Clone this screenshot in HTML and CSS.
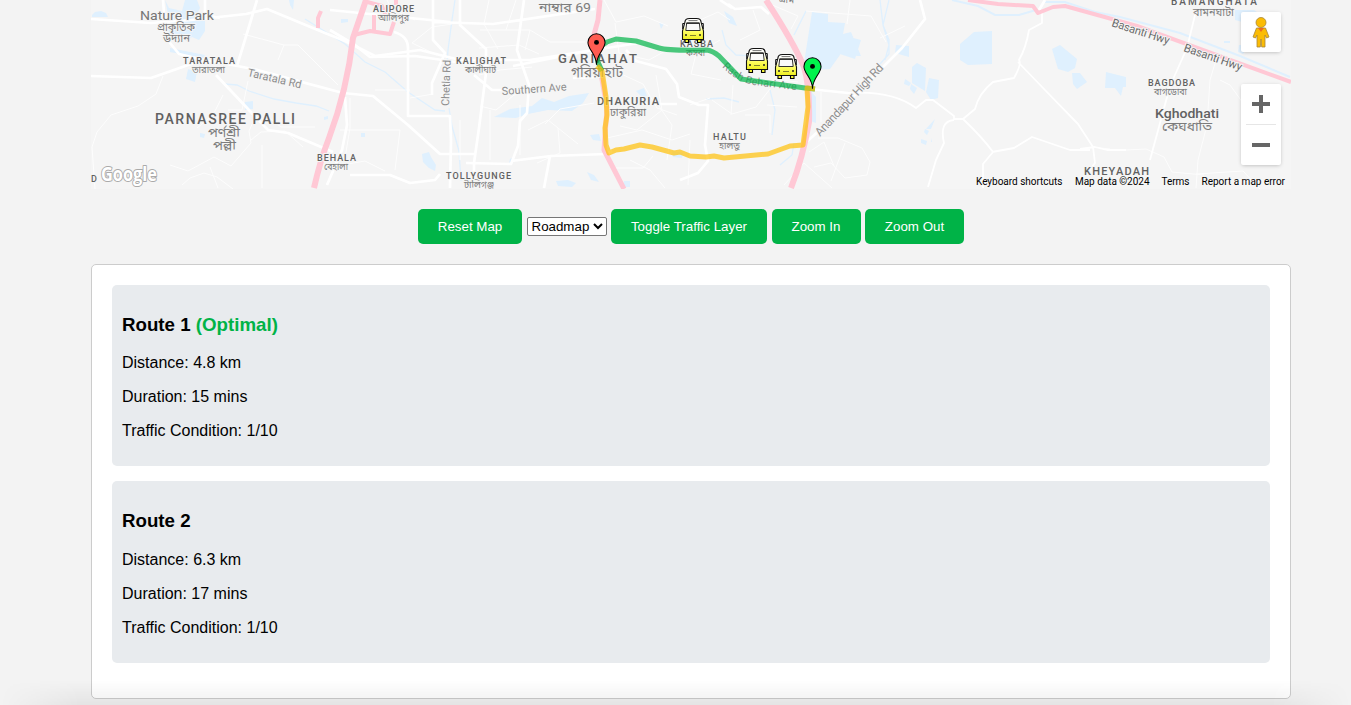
FILE: index.html
```html
<!DOCTYPE html>
<html lang="en">
<head>
<meta charset="utf-8">
<title>Route Planner</title>
<link rel="stylesheet" href="styles.css">
</head>
<body>
<main class="page">
  <section class="map">
    <svg class="map-canvas" viewBox="91 0 1200 189" width="1200" height="189">
      <defs>
        <linearGradient id="busPaint" x1="0" y1="0" x2="0" y2="1">
          <stop offset="0" stop-color="#fff"/><stop offset=".4" stop-color="#fffff0"/><stop offset=".62" stop-color="#ffff62"/><stop offset="1" stop-color="#eded20"/>
        </linearGradient>
        <symbol id="bus" viewBox="0 0 23 28" overflow="visible">
          <path d="M3.500 22v3.500h3.500V22M16 22v3.500h3.500V22" fill="#f4f43a" stroke="#000" stroke-width="1.100"/>
          <path d="M3.500 5Q3.500 1.500 8 1.500h7q4.500 0 4.500 3.500L22 14v8.500H1V14z" fill="url(#busPaint)" stroke="#111" stroke-width="1.100"/>
          <path d="M3 6.500H1.200V12M20 6.500h1.800V12" fill="none" stroke="#111" stroke-width="1"/>
          <path d="M7 3.600h9" stroke="#777" stroke-width="1"/>
          <path d="M5.200 6h12.600l.9 7.500H4.300z" fill="#fafafa" stroke="#333" stroke-width="1"/>
          <path d="M5 6.200h13" stroke="#222" stroke-width="1.300"/>
          <circle cx="4.500" cy="18" r="1" fill="#222"/><circle cx="18.500" cy="18" r="1" fill="#222"/>
          <path d="M8.500 18.500h6" stroke="#77772a" stroke-width=".9"/>
        </symbol>
        <symbol id="pin" viewBox="0 0 20 34" overflow="visible">
          <path d="M10 33C10 22 1 17 1 9.500a9 9 0 0 1 18 0C19 17 10 22 10 33z" stroke="#000" stroke-width="1.100"/>
          <circle cx="10" cy="9.500" r="2.600" fill="#000"/>
        </symbol>
      </defs>
      <rect x="91" width="1200" height="189" fill="#f5f5f5"/>

      <g class="water">
        <path d="M92 17v-2l3-3 6-1 5 2 2 4z"/>
        <path d="M165 0l4 8 13 3 3-11h12l3 8-4 8 9-2v17l-6 9-7-3-6 4-5-5-8 5-5-6 2-12z"/>
        <path d="M188 69l9 3-2 10-9-3zM245 102l8-1v8l-8 1zM289 0h5l-1 10-3-5zM200 133l5 1-1 4-4-1zM324 117l4-1v3l-4 1z"/>
        <path d="M170 48l35 7-2 3-33-6zM341 19l7 0v3l-7 1zM361 133h4v4h-4z"/>
        <path d="M422 154l7-2 2 5 5 8-1 6-6-3-6-6z"/>
        <path d="M494 117l16-8 22-3 10-8 12 4 15-6 20-3-6 10-11 8-24-1-20 4-12 4z"/>
        <path d="M590 135l9-1 2 7-8-1zM556 181l12-1 8 3-4 4-14-1zM587 172l7 3 5 7-8-2zM510 159l4-2-1 5-4 1zM624 181h6v6h-7z"/>
        <path d="M659 22l5 2-3 5zM636 91l8-3 3 8-5 1zM672 151l11 2-1 5-9-1z"/>
        <path d="M812 12l16 2v8l17 1-2 11 8-2 10 24-4 0-15-4-12 17-16 1-10-7zM838 34l23 6-6 19-15-5z"/>
        <path d="M808 88l8 9v26l-8-3-1-10zM724 11l9 6 4 9-8-3z"/>
        <path d="M896 45l13 1v11l-14-4z"/>
        <path d="M960 44l14-12 18-1v33l-24 1-8-5zM912 67l5-4 9 5-1 23-13-8zM929 78l10 2-1 18-7 2-5-8zM905 79l6 4-2 3-5-2zM911 84l6 4-3 6-4-5zM935 119l-9 10h5zM925 129l4 2-2 4-3-3zM921 139l6 2-1 4-5-2zM931 138v4h1z"/>
        <path d="M1052 49l8-4 17 14-2 9-7 4-10-3zM1072 73h8l7 9-10 7-4-5zM1106 72l20 5v10h-3l-2 9-6-8h-10z"/>
        <path d="M1235 10l19 0 7 5 5 6-9 5-22-6zM1224 41h6v2h-6zM1239 45l10 0-6 9-5-2z"/>
      </g>
      <g class="streams">
        <path d="M225 84l12 1 12 6 25 8 22 4 20 3 13 5M305 19l40 25 20 18 20 10 23 20 27 18 10 1"/>
        <path d="M455 0l-3 20-4 30-2 30M449 108l3 18 7 25 2 30"/>
        <path d="M952 0l26 6 17 9 24 0 17-5M1045 2l20 0 30 10 25 5 60 16 60 23 50 21" stroke-width="2"/>
        <path d="M880 0l3 25 6 20-4 15M806 11l-12 24M706 99l18-1 15 4M722 30l4 15 10 10 16 1M770 90l5 20-3 25M780 165l12-10 2-12M889 0l-6 25 6 15v14l-9 10"/>
      </g>
      <g class="lanes">
        <path d="M163 76l-7 18-18 12-27 9-14 17-5 15 3 42M170 165l18 6 26-14 17 9 20-23-2-12 5-11 15-2 12 9h34M182 185l8-7 14-5 13 4 16 12M243 34l41 11 14 0 40 40M284 45l-6 15M223 95l-10 20-16 13M248 81l-6 29-14 0M251 140l10-8 24-1 18 16M210 167l8 21M262 145v43"/>
        <path d="M375 90h35M350 98v30l-5 30M340 130h60l-5 40M330 155l20 5M415 20l-24-12-4-8M437 55l-25-12 20-16 20-3M410 98l23-4M480 30h50l20 12h35M479 48l40-3 20 9M489 0l-5 24 14 25M516 0l-10 30M530 30l-5 20M480 106l16 4 18-15 20-5M479 75l21-5 32-3M528 130l20-10 30 24M545 124l15-15 34-6M558 128l2 25-23 10M330 167l35-6 20 10M460 120v40M490 110v50M520 105v50"/>
        <path d="M604 0l12 22 28-6 24 10M615 23l4 30 30 7 18-10M619 73l24 11 14 24 20 7M656 75l6 35-25 20-17-4M607 138l35-8 30 10 18-6M654 99l18 26-5 35M630 160l20 10 15 18M613 168l30 0 10-12M690 140l-2 45M720 40l-24 14-5 20 30 6M712 100l20 14 24-7 14-18M745 115h25v18M733 85l-2 30M780 80l18 2M700 20l18-8 12 8M753 10l7 20-20 10M770 4l28 12-7 13"/>
        <path d="M767 105l30 2M690 105l20-7M821 92v30M818 138l20 0 24 10 8 14-3 13-22 3-14-15-17 4M850 0l-3 24M806 11l65 5 15 26M809 152l15-10 10 24M784 185l20-22 28 25M845 143l-14 38M880 38l25-12"/>
        <path d="M1126 150l20-1 18 8 8 15 32 3M1216 60l-6 20-3 45-9 35-2 28M1220 80l10 5 13 18M1196 174l47-3 17 18M1110 149l-18-2"/>
      </g>
      <g class="minor">
        <path d="M848 93q44-3 68 15l10-8h7l21 16v3h9l12-10q4-16 18-27l21-4q8-14 5-18 7-12 10-30l13-7V12M963 119q19 18 30 33l-10 12v24M954 120q-15 1-10 23l-8 17-8 27M992 152l22-4 18-11 38 13h20M1018 62l26 27 34 35 15 23 2 16-6 8M1080 149l15-2 12 3h19"/>
        <path d="M1195 15l-8 33-17 38-20 74"/>
      </g>
      <g class="major">
        <path d="M91 19l60 4 40-3 55-6 21-5 58 24 20 8 30 15 45-6 40 10h70l115-18M91 76l60 2 40-14 20-3 42 8 90 24 30 3 35 29 32 29h35M163 0l3 38 13 16 25 6M257 0l-6 20-14 46M216 75l32 34 20 21 20 3 45 19M345 97l2 28-5 25-15 35M205 0v15l15 3M350 175l40 0 20 8 25-3 5-6"/>
        <path d="M330 30l25 15 15 12 45-1 75 11M394 32q14 4 14 16v68h42l1 25-1 47M433 0v40l12 13-13 30v12M433 22l60 2 102-15M460 0v25l26 24v24l-7 55-5 35v20M474 75l18 15 20 0M524 0l-7 50 12 35-2 28-7 8-2 25-7 18-45-1M511 161l40-5 55-2 6-3M550 156l-6 32M513 66l55-11 30-6M573 78l22-1 10-9"/>
        <path d="M626 50l10 11 30 8 11 15 2 13 20 8h9l-3 40 3 16-10 12-18 7M677 104l-34 0M728 4l7 5 26-2 8 7M720 0l12 8M800 88l48 5M802 146l20-18 80-80 23-29-5-19M1045 0l-6 10M330 10l120 12"/>
      </g>
      <g class="highway">
        <path d="M314 188q6-27 15-50 18-48 24-100l13-38" stroke-width="6"/>
        <path d="M364 1l18 5 4 10M354 35l16-4 20 3 4-12M374 30V15M396 0v5M321 11l-3 7v10" stroke-width="4"/>
        <path d="M600 0l-2 20-6 22 8 26 7 40-3 42 20 39" stroke-width="5"/>
        <path d="M766 0q28 43 38 67 6 20 5 55-6 35-18 66" stroke-width="6"/>
        <path d="M968 0l30 4 35 2 5 7 15-6 12-1 72 20 154 56" stroke-width="4"/>
      </g>

      <g class="labels">
        <text x="140" y="20" font-size="13" class="soft" textLength="74" lengthAdjust="spacingAndGlyphs">Nature Park</text>
        <g class="bengali">
          <text x="157" y="31" font-size="11" textLength="38" lengthAdjust="spacingAndGlyphs">প্রাকৃতিক</text>
          <text x="163" y="42" font-size="11" textLength="27" lengthAdjust="spacingAndGlyphs">উদ্যান</text>
          <text x="192" y="73" font-size="9" textLength="33" lengthAdjust="spacingAndGlyphs">তারাতলা</text>
          <text x="208" y="137" font-size="13" textLength="32" lengthAdjust="spacingAndGlyphs">পর্ণশ্রী</text>
          <text x="213" y="150" font-size="13" textLength="23" lengthAdjust="spacingAndGlyphs">পল্লী</text>
          <text x="324" y="170" font-size="9" textLength="24" lengthAdjust="spacingAndGlyphs">বেহালা</text>
          <text x="378" y="21" font-size="9" textLength="31" lengthAdjust="spacingAndGlyphs">আলিপুর</text>
          <text x="465" y="73" font-size="9" textLength="31" lengthAdjust="spacingAndGlyphs">কালীঘাট</text>
          <text x="539" y="12" font-size="13" textLength="52" lengthAdjust="spacingAndGlyphs">নাম্বার 69</text>
          <text x="464" y="188" font-size="9" textLength="30" lengthAdjust="spacingAndGlyphs">টালিগঞ্জ</text>
          <text x="571" y="77" font-size="14" textLength="52" lengthAdjust="spacingAndGlyphs">গরিয়াহাট</text>
          <text x="610" y="116" font-size="11" textLength="36" lengthAdjust="spacingAndGlyphs">ঢাকুরিয়া</text>
          <text x="686" y="56" font-size="9" textLength="19" lengthAdjust="spacingAndGlyphs">কসবা</text>
          <text x="719" y="149" font-size="9" textLength="21" lengthAdjust="spacingAndGlyphs">হালতু</text>
          <text x="779" y="3" font-size="9" textLength="15" lengthAdjust="spacingAndGlyphs">গ্রাম</text>
          <text x="1193" y="16" font-size="11" textLength="41" lengthAdjust="spacingAndGlyphs">বামনঘাটা</text>
          <text x="1154" y="95" font-size="9" textLength="33" lengthAdjust="spacingAndGlyphs">বাগডোবা</text>
          <text x="1162" y="131" font-size="13" textLength="50" lengthAdjust="spacingAndGlyphs">কেঘধাতি</text>
        </g>
        <text x="183" y="64" font-size="9" textLength="52" class="caps">TARATALA</text>
        <text x="247" y="76" font-size="11" textLength="55" transform="rotate(13 247 76)" class="road">Taratala Rd</text>
        <text x="155" y="124" font-size="14" textLength="140" class="caps">PARNASREE PALLI</text>
        <text x="317" y="161" font-size="9" textLength="39" class="caps">BEHALA</text>
        <text x="373" y="12" font-size="9" textLength="41" class="caps">ALIPORE</text>
        <text x="449" y="106" font-size="11" textLength="46" transform="rotate(-88 449 106)" class="road">Chetla Rd</text>
        <text x="456" y="64" font-size="9" textLength="50" class="caps">KALIGHAT</text>
        <text x="502" y="95" font-size="11" textLength="65" transform="rotate(-4 502 95)" class="road">Southern Ave</text>
        <text x="446" y="179" font-size="9" textLength="65" class="caps">TOLLYGUNGE</text>
        <text x="558" y="63" font-size="13" textLength="79" class="caps">GARIAHAT</text>
        <text x="597" y="105" font-size="11" textLength="62" class="caps">DHAKURIA</text>
        <text x="680" y="47" font-size="9" textLength="33" class="caps">KASBA</text>
        <text x="713" y="140" font-size="9" textLength="33" class="caps">HALTU</text>
        <path id="behari" d="M722 67Q737 82 754 85L802 91" fill="none"/>
        <text font-size="10.500" class="road"><textPath href="#behari" textLength="80">Rash Behari Ave</textPath></text>
        <text x="820" y="137" font-size="12" textLength="94" transform="rotate(-47 820 137)" class="road">Anandapur High Rd</text>
        <text x="1171" y="5" font-size="10" textLength="86" class="caps">BAMANGHATA</text>
        <text x="1111" y="26" font-size="11.500" textLength="60" transform="rotate(18 1111 26)" class="road dark">Basanti Hwy</text>
        <text x="1183" y="51" font-size="11.500" textLength="61" transform="rotate(19 1183 51)" class="road dark">Basanti Hwy</text>
        <text x="1148" y="86" font-size="9" textLength="47" class="caps">BAGDOBA</text>
        <text x="1155" y="118" font-size="13.500" textLength="64" lengthAdjust="spacingAndGlyphs" class="town">Kghodhati</text>
        <text x="1084" y="175" font-size="11" textLength="65" class="caps">KHEYADAH</text>
        <text x="91" y="182" font-size="9" class="caps">D</text>
      </g>

      <g class="routes">
        <path class="route-best" d="M602 71L598 62Q594 49 607 42L616 39 636 41 659 48Q669 51 707 50 713 51 719 56L741 79 805 88 815 89"/>
        <path class="route-alt" d="M597 66L602 71 606 97 607 115 605 128 606 145 609 153 616 150 624 149 640 145 652 147 674 153 680 152 690 156 706 157 714 156 724 158 768 154 790 146 803 145 808 107 807 88 815 89"/>
      </g>

      <use href="#bus" x="681.500" y="17" width="23" height="28"/>
      <use href="#bus" x="745.500" y="47" width="23" height="28"/>
      <use href="#bus" x="774.500" y="53" width="23" height="28"/>
      <use href="#pin" x="587" y="33" width="19" height="33" fill="#ff5c52"/>
      <use href="#pin" x="803" y="57" width="19" height="33" fill="#00f34c"/>

      <text x="101" y="181" class="brand" textLength="56" lengthAdjust="spacingAndGlyphs">Google</text>
      <g class="credits">
        <text x="976" y="185" textLength="86.500">Keyboard shortcuts</text>
        <text x="1075" y="185" textLength="74.500">Map data ©2024</text>
        <text x="1161.500" y="185" textLength="28">Terms</text>
        <text x="1201.500" y="185" textLength="83.500">Report a map error</text>
      </g>
    </svg>
    <div class="map-tools">
      <div class="tool">
        <svg width="18" height="32" viewBox="0 0 18 32" fill="#fbbc04" stroke="#a8873a" stroke-width=".8">
          <path d="M4.500 12h9l3.500 9-2.500 1-1.500-3v12H9.700l-.7-8-.7 8H5V19l-1.500 3L1 21z"/>
          <path d="M6 12h6l-3 4z" fill="#ee6c20" stroke="none"/>
          <circle cx="9" cy="6.500" r="5"/>
        </svg>
      </div>
      <div class="tool zoom">
        <svg width="18" height="18"><path d="M0 9h18M9 0v18" stroke="#666" stroke-width="4"/></svg>
        <span class="zoom-line"></span>
        <svg width="18" height="18"><path d="M0 9h18" stroke="#666" stroke-width="4"/></svg>
      </div>
    </div>
  </section>

  <div class="controls">
    <button class="btn reset">Reset Map</button>
    <select class="map-type"><option>Roadmap</option><option>Satellite</option></select>
    <button class="btn traffic">Toggle Traffic Layer</button>
    <button class="btn in">Zoom In</button>
    <button class="btn out">Zoom Out</button>
  </div>

  <section class="panel">
    <article class="route">
      <h3>Route 1 <span class="optimal">(Optimal)</span></h3>
      <p>Distance: 4.8 km</p>
      <p>Duration: 15 mins</p>
      <p>Traffic Condition: 1/10</p>
    </article>
    <article class="route">
      <h3>Route 2</h3>
      <p>Distance: 6.3 km</p>
      <p>Duration: 17 mins</p>
      <p>Traffic Condition: 1/10</p>
    </article>
  </section>
</main>
<div class="bottom-shade"></div>
</body>
</html>
```
FILE: styles.css
```css
* { box-sizing: border-box; }
html { overflow: hidden; }
body {
  margin: 0;
  height: 705px;
  overflow: hidden;
  background: #f3f3f3;
  color: #000;
  font-family: "Liberation Sans", Arial, sans-serif;
}
.page { width: 1200px; margin-left: 91px; }

.map { position: relative; height: 189px; overflow: hidden; }
.map-canvas { display: block; }
.water { fill: #dff0fe; }
.streams { fill: none; stroke: #dff0fe; stroke-width: 1.3; }
.lanes { fill: none; stroke: #fdfdfd; stroke-width: 1; }
.minor { fill: none; stroke: #fff; stroke-width: 1.8; stroke-linejoin: round; }
.major { fill: none; stroke: #fff; stroke-width: 2.7; stroke-linejoin: round; }
.highway { fill: none; stroke: #ffc8d5; stroke-linejoin: round; }
.labels {
  font-family: Roboto, "Noto Sans Bengali", sans-serif;
  fill: #666;
  stroke: #f5f5f5;
  stroke-width: 2px;
  stroke-linejoin: round;
  paint-order: stroke;
}
.labels #behari { stroke: none; }
.labels .bengali { fill: #7c7c7c; }
.labels .caps { font-weight: 500; fill: #616161; }
.labels .soft { fill: #757575; }
.labels .road { fill: #8e8e8e; }
.labels .dark { fill: #6b6b6b; }
.labels .town { font-weight: 500; fill: #616161; }
.routes { fill: none; stroke-width: 5; stroke-linejoin: round; }
.route-best { stroke: #00b347; stroke-opacity: .7; }
.route-alt { stroke: #ffc107; stroke-opacity: .7; }
.brand {
  font-family: "Open Sans", sans-serif;
  font-weight: 700;
  font-size: 19px;
  fill: #fff;
  stroke: #aaa;
  stroke-width: 2px;
  stroke-linejoin: round;
  paint-order: stroke;
}
.credits { font-family: Roboto, sans-serif; font-size: 10px; fill: #000; }

.map-tools {
  position: absolute;
  top: 12px;
  right: 10px;
  display: flex;
  flex-direction: column;
  gap: 32px;
}
.tool {
  display: flex;
  align-items: center;
  justify-content: center;
  width: 40px;
  height: 40px;
  background: #fff;
  border-radius: 2px;
  box-shadow: 0 1px 4px -1px rgba(0, 0, 0, .3);
}
.zoom { flex-direction: column; height: 81px; gap: 11px; }
.zoom-line { width: 30px; height: 1px; background: #e6e6e6; }

.controls {
  display: flex;
  align-items: center;
  justify-content: center;
  gap: 4.5px;
  height: 35px;
  margin: 20px 0;
}
.btn {
  height: 35px;
  padding: 0;
  border: 0;
  border-radius: 5px;
  background: #00b347;
  color: #fff;
  font: 13.333px "Liberation Sans", Arial, sans-serif;
}
.reset { width: 104px; }
.traffic { width: 156px; }
.in { width: 89px; }
.out { width: 99px; }
.map-type {
  width: 80px;
  height: 19px;
  padding: 0;
  border: 1px solid #767676;
  border-radius: 2px;
  background-color: #fff;
  color: #000;
  font: 13.333px "Liberation Sans", Arial, sans-serif;
}

.panel {
  padding: 20px;
  background: #fff;
  border: 1px solid #ccc;
  border-radius: 5px;
}
.route {
  margin-bottom: 15px;
  padding: 10px;
  background: #e8ebee;
  border-radius: 5px;
}
.route h3 { margin: 18.72px 0; font-size: 18.72px; line-height: 22px; }
.route p { margin: 16px 0; font-size: 16px; line-height: 18px; }
.optimal { color: #00b347; }

.bottom-shade {
  position: absolute;
  left: 0;
  right: 0;
  bottom: 0;
  height: 25px;
  background: linear-gradient(transparent, rgba(0, 0, 0, .06));
  mask-image: linear-gradient(90deg, transparent, #000 80px, #000 1271px, transparent);
  pointer-events: none;
}
```
